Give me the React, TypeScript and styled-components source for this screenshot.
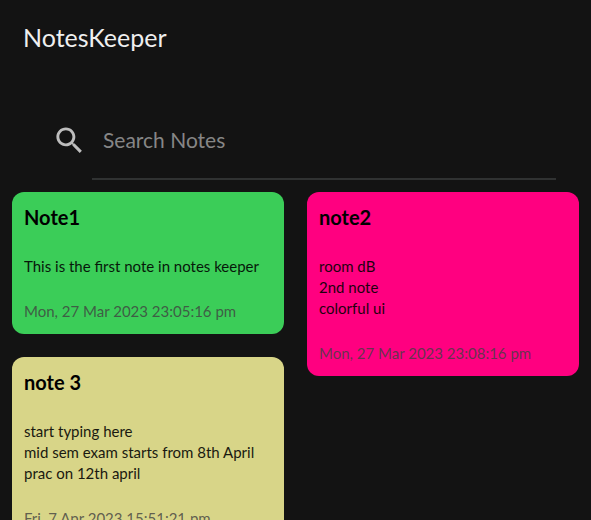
import React, { useState } from "react";
import styled, { createGlobalStyle } from "styled-components";

const GlobalStyle = createGlobalStyle`
  *, *::before, *::after { box-sizing: border-box; }
  html { scrollbar-width: none; background: #131313; }
  body {
    margin: 0;
    background: #131313;
    color: #f0f0f0;
    font-family: Lato, "Open Sans", sans-serif;
  }
`;

const Page = styled.div`
  display: flex;
  flex-direction: column;
`;

const AppBar = styled.header`
  display: flex;
  align-items: center;
  height: 74px;
  padding: 0 23px;
`;

const AppTitle = styled.h1`
  margin: 0;
  font-size: 25px;
  line-height: 32px;
  font-weight: 400;
  color: #efefef;
`;

const SearchBar = styled.label`
  display: flex;
  align-items: center;
  margin: 26px 35px 12px 52px;
  color: #bdbdbd;
`;

const SearchIcon = styled.svg`
  flex: none;
  width: 35px;
  height: 35px;
  margin-right: 5px;
  fill: currentColor;
`;

const SearchInput = styled.input`
  flex: 1;
  min-width: 0;
  height: 80px;
  padding: 0 11px;
  border: 0;
  border-bottom: 2px solid #303232;
  border-radius: 0;
  outline: 0;
  background: transparent;
  color: #efefef;
  font: inherit;
  font-size: 21px;

  &::placeholder {
    color: #868686;
    opacity: 1;
  }
`;

const Board = styled.main`
  display: flex;
  align-items: flex-start;
  gap: 23px;
  padding: 0 12px 23px;
`;

const Column = styled.div`
  flex: 1;
  min-width: 0;
  display: flex;
  flex-direction: column;
  gap: 23px;
`;

const Card = styled.article<{ $color: string }>`
  padding: 12px;
  border-radius: 12px;
  background: ${({ $color }) => $color};
  color: #000;
`;

const CardTitle = styled.h2`
  margin: 0 0 26px;
  font-size: 20px;
  line-height: 26px;
  font-weight: 700;
`;

const CardText = styled.p`
  margin: 0 0 24px;
  font-size: 15px;
  line-height: 21px;
  white-space: pre-line;
  opacity: 0.88;
`;

const CardDate = styled.time`
  display: block;
  font-size: 15px;
  line-height: 21px;
  color: rgba(64, 64, 64, 0.8);
`;

type Note = { title: string; text: string; date: string; color: string };

const columns: Note[][] = [
  [
    {
      title: "Note1",
      text: "This is the first note in notes keeper",
      date: "Mon, 27 Mar 2023 23:05:16 pm",
      color: "#3bcd58",
    },
    {
      title: "note 3",
      text: "start typing here\nmid sem exam starts from 8th April\nprac on 12th april",
      date: "Fri, 7 Apr 2023 15:51:21 pm",
      color: "#d8d588",
    },
  ],
  [
    {
      title: "note2",
      text: "room dB\n2nd note\ncolorful ui",
      date: "Mon, 27 Mar 2023 23:08:16 pm",
      color: "#ff0080",
    },
  ],
];

export default function App() {
  const [query, setQuery] = useState("");
  const matches = (note: Note) =>
    (note.title + " " + note.text).toLowerCase().includes(query.toLowerCase());

  return (
    <>
      <GlobalStyle />
      <Page>
        <AppBar>
          <AppTitle>NotesKeeper</AppTitle>
        </AppBar>
        <SearchBar>
          <SearchIcon viewBox="0 0 24 24" aria-hidden="true">
            <path d="M15.5 14h-.79l-.28-.27C15.41 12.59 16 11.11 16 9.5 16 5.91 13.09 3 9.5 3S3 5.91 3 9.5 5.91 16 9.5 16c1.61 0 3.09-.59 4.23-1.57l.27.28v.79l5 4.99L20.49 19l-4.99-5zm-6 0C7.01 14 5 11.99 5 9.5S7.01 5 9.5 5 14 7.01 14 9.5 11.99 14 9.5 14z" />
          </SearchIcon>
          <SearchInput
            type="text"
            placeholder="Search Notes"
            aria-label="Search Notes"
            value={query}
            onChange={(event) => setQuery(event.target.value)}
          />
        </SearchBar>
        <Board>
          {columns.map((notes, index) => (
            <Column key={index}>
              {notes.filter(matches).map((note) => (
                <Card key={note.title} $color={note.color}>
                  <CardTitle>{note.title}</CardTitle>
                  <CardText>{note.text}</CardText>
                  <CardDate>{note.date}</CardDate>
                </Card>
              ))}
            </Column>
          ))}
        </Board>
      </Page>
    </>
  );
}
